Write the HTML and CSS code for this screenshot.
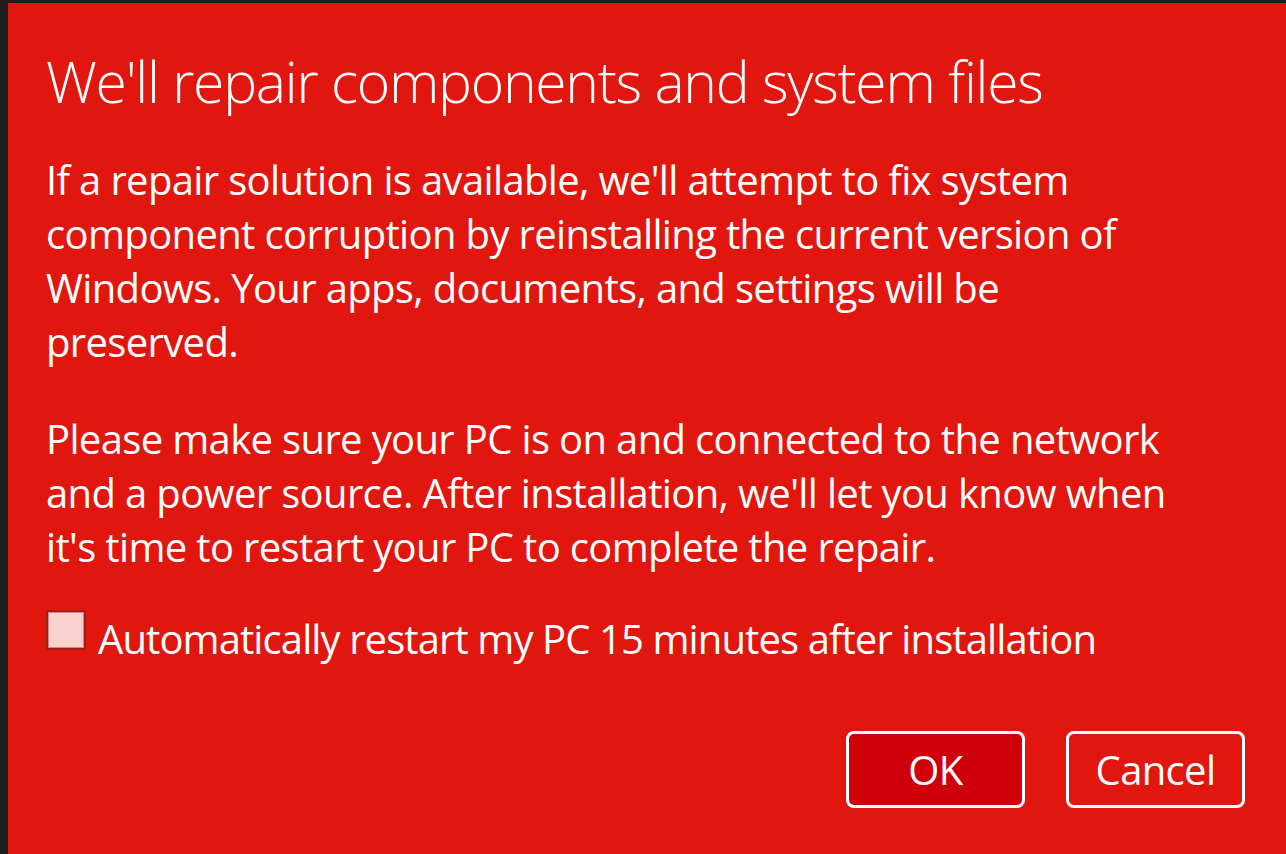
FILE: index.html
```html
<!DOCTYPE html>
<html lang="en">
<head>
    <meta charset="UTF-8">
    <title>Repair</title>
    <link rel="stylesheet" href="styles.css">
</head>
<body>
    <div class="screen">
        <div class="edge"></div>
        <div class="dialog">
            <h1 class="title">We'll repair components and system files</h1>
            <p class="text">If a repair solution is available, we'll attempt to fix system<br>
                component corruption by reinstalling the current version of<br>
                Windows. Your apps, documents, and settings will be<br>
                preserved.</p>
            <p class="text second">Please make sure your PC is on and connected to the network<br>
                and a power source. After installation, we'll let you know when<br>
                it's time to restart your PC to complete the repair.</p>
            <label class="option">
                <span class="box"></span>
                <span class="text label">Automatically restart my PC 15 minutes after installation</span>
            </label>
            <div class="actions">
                <button class="btn primary">OK</button>
                <button class="btn">Cancel</button>
            </div>
        </div>
    </div>
</body>
</html>
```

FILE: styles.css
```css
html, body{
    margin: 0;
    height: 100%;
    background-color: #1e1e1e;
    overflow: hidden;
}
.screen{
    display: flex;
    height: 100%;
    padding-top: 3px;
    box-sizing: border-box;
}
.edge{
    width: 8px;
    flex: none;
}
.dialog{
    flex: 1;
    background-color: #e1160e;
    color: #ffffff;
    font-family: "Open Sans", "Noto Sans", sans-serif;
    padding: 44px 41px 0 38px;
    display: flex;
    flex-direction: column;
}
.title{
    margin: 0;
    font-size: 57px;
    font-weight: 300;
    line-height: 68px;
    letter-spacing: -1.25px;
    white-space: nowrap;
}
.text{
    margin: 0;
    font-size: 40px;
    line-height: 54px;
    letter-spacing: -0.65px;
    white-space: nowrap;
}
.dialog > .text{
    margin-top: 38px;
}
.dialog > .second{
    margin-top: 43px;
}
.option{
    display: flex;
    align-items: flex-start;
    gap: 12px;
    margin-top: 38px;
}
.label{
    letter-spacing: -0.9px;
}
.box{
    width: 36px;
    height: 36px;
    margin-top: -2px;
    background-color: #f9d2d0;
    border: 2px solid #a91c16;
    box-shadow: inset 0 0 0 1px #c98a86;
    flex: none;
}
.actions{
    display: flex;
    justify-content: flex-end;
    gap: 41px;
    margin-top: 65px;
}
.btn{
    width: 179px;
    height: 77px;
    border: 3px solid #ffffff;
    border-radius: 8px;
    background-color: transparent;
    color: #ffffff;
    font-family: "Open Sans", "Noto Sans", sans-serif;
    font-size: 40px;
    letter-spacing: -0.65px;
    padding: 0;
}
.primary{
    background-color: #d0000b;
}
```
